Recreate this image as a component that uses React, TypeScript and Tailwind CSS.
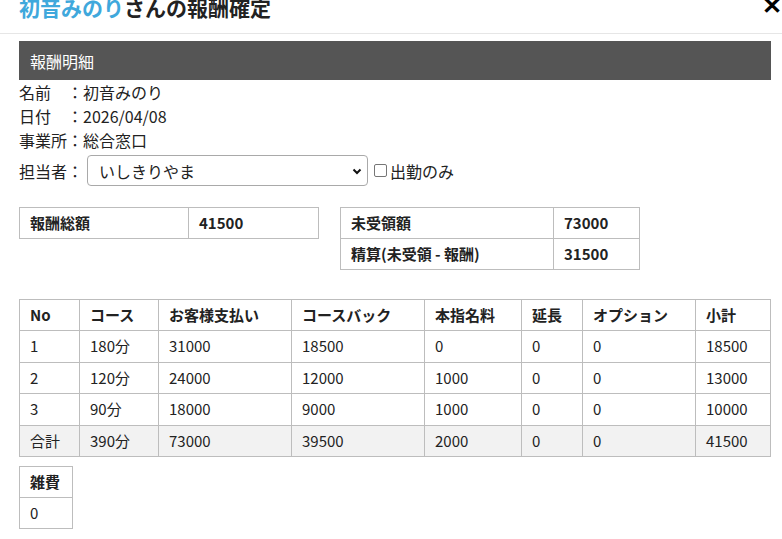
import React from "react";

const F = "font-['Noto_Sans_CJK_JP','Noto_Sans',sans-serif]";

const rows = [
  ["1", "180分", "31000", "18500", "0", "0", "0", "18500"],
  ["2", "120分", "24000", "12000", "1000", "0", "0", "13000"],
  ["3", "90分", "18000", "9000", "1000", "0", "0", "10000"],
];
const total = ["合計", "390分", "73000", "39500", "2000", "0", "0", "41500"];
const heads = ["No", "コース", "お客様支払い", "コースバック", "本指名料", "延長", "オプション", "小計"];
const widths = ["w-[60px]", "w-[79px]", "w-[133px]", "w-[133px]", "w-[97px]", "w-[61px]", "w-[113px]", "w-[75px]"];

export default function App() {
  return (
    <div className={`w-[782px] h-[539px] overflow-hidden bg-white text-[#222] ${F}`}>
      <div className="relative h-[34px] border-b border-[#e6e6e6]">
        <div className="relative -top-[9px] pl-[19px] text-[21px] font-bold leading-[32px] text-[#222]">
          <span className="text-[#3fa8dc]">初音みのり</span>さんの報酬確定
        </div>
        <div className="absolute right-0 -top-[8px] text-[24px] font-bold leading-[24px] text-black">✕</div>
      </div>
      <div className="pl-[19px] pr-[11px]">
        <div className="mt-[7px] h-[39px] bg-[#555555] text-white text-[16px] flex items-center pl-[11px]">
          報酬明細
        </div>
        <div className="text-[16px] leading-6">
          <div className="flex"><span className="w-[48px]">名前</span><span>：</span><span>初音みのり</span></div>
          <div className="flex"><span className="w-[48px]">日付</span><span>：</span><span>2026/04/08</span></div>
          <div className="flex"><span className="w-[48px]">事業所</span><span>：</span><span>総合窓口</span></div>
        </div>
        <div className="flex items-center mt-[3px] text-[16px]">
          <span>担当者：</span>
          <div className="ml-[4px] w-[281px] h-[31px] border border-[#a9a9a9] rounded-[4px] flex items-center justify-between pl-[11px] pr-[4px]">
            <span>いしきりやま</span>
            <svg width="12" height="12" viewBox="0 0 12 12"><path d="M2.5 4.5 L6 8 L9.5 4.5" fill="none" stroke="#111" strokeWidth="2" /></svg>
          </div>
          <div className="ml-[6px] w-[13px] h-[13px] border border-[#767676] rounded-[2px] bg-white" />
          <span className="ml-[3px] text-[16px]">出勤のみ</span>
        </div>
        <div className="flex items-start gap-[21px] mt-[21px] text-[15px] font-bold">
          <table className="border-collapse w-[300px]">
            <tbody>
              <tr className="h-[31px]">
                <td className="border border-[#bdbdbd] pl-[10px] w-[169px]">報酬総額</td>
                <td className="border border-[#bdbdbd] pl-[10px]">41500</td>
              </tr>
            </tbody>
          </table>
          <table className="border-collapse w-[300px]">
            <tbody>
              <tr className="h-[31px]">
                <td className="border border-[#bdbdbd] pl-[10px] w-[213px]">未受領額</td>
                <td className="border border-[#bdbdbd] pl-[10px]">73000</td>
              </tr>
              <tr className="h-[31px]">
                <td className="border border-[#bdbdbd] pl-[10px]">精算(未受領 - 報酬)</td>
                <td className="border border-[#bdbdbd] pl-[10px]">31500</td>
              </tr>
            </tbody>
          </table>
        </div>
        <table className="border-collapse w-[752px] mt-[29px] text-[15px] table-fixed">
          <thead>
            <tr className="h-[31px]">
              {heads.map((h, i) => (
                <th key={h} className={`${widths[i]} border border-[#bdbdbd] pl-[10px] text-left font-bold`}>{h}</th>
              ))}
            </tr>
          </thead>
          <tbody>
            {rows.map((r) => (
              <tr key={r[0]} className="h-[31.5px]">
                {r.map((c, i) => (
                  <td key={i} className="border border-[#bdbdbd] pl-[10px]">{c}</td>
                ))}
              </tr>
            ))}
            <tr className="h-[31.5px] bg-[#f2f2f2]">
              {total.map((c, i) => (
                <td key={i} className="border border-[#bdbdbd] pl-[10px]">{c}</td>
              ))}
            </tr>
          </tbody>
        </table>
        <table className="border-collapse w-[54px] mt-[9px] text-[15px]">
          <tbody>
            <tr className="h-[31px]"><th className="border border-[#bdbdbd] pl-[10px] text-left font-bold">雑費</th></tr>
            <tr className="h-[31px]"><td className="border border-[#bdbdbd] pl-[10px]">0</td></tr>
          </tbody>
        </table>
      </div>
    </div>
  );
}
